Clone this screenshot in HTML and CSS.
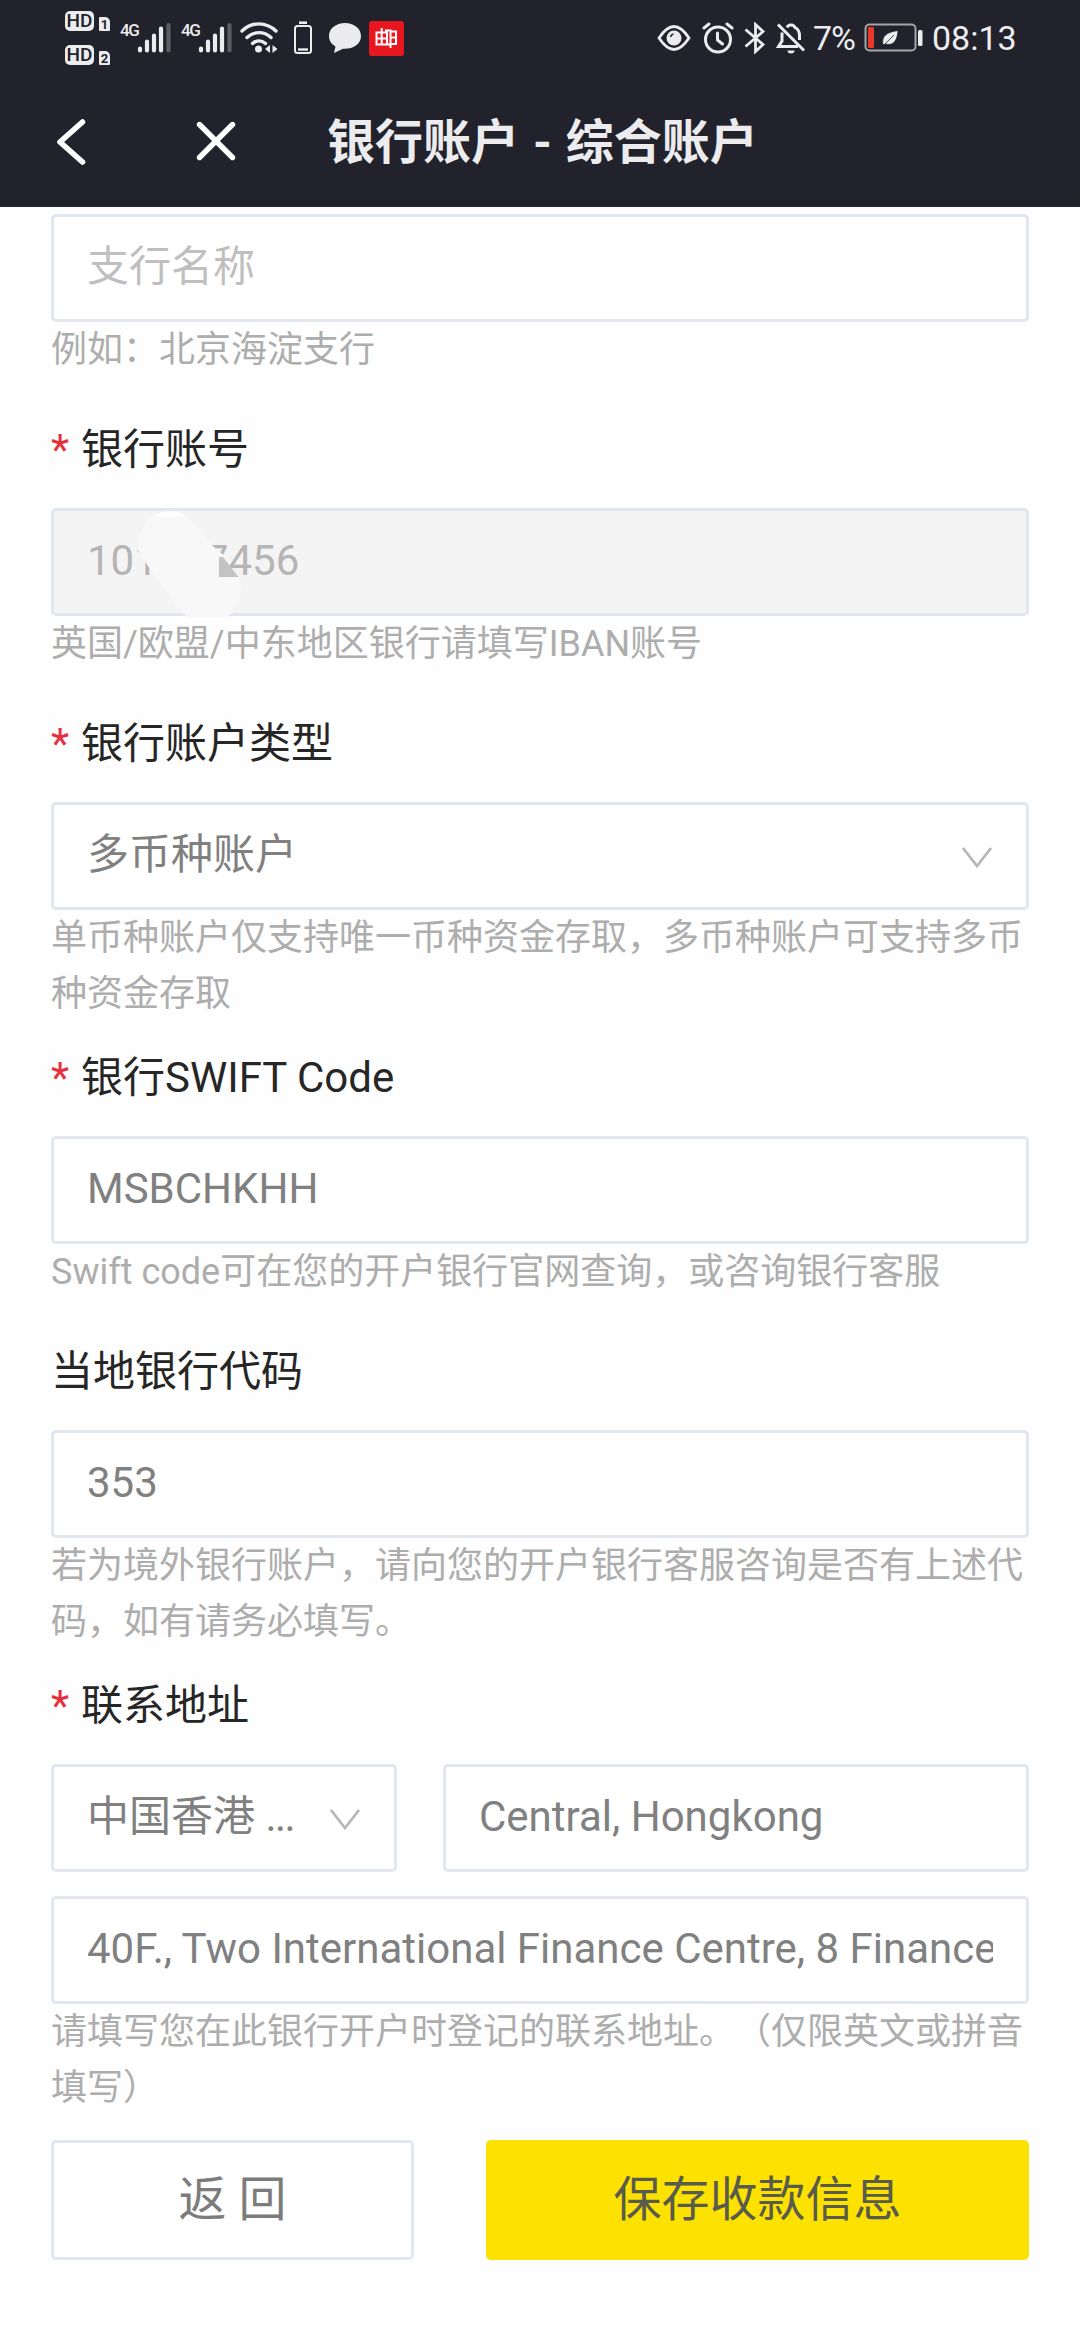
FILE: index.html
```html
<!DOCTYPE html>
<html lang="zh-CN">
<head>
<meta charset="utf-8">
<title>银行账户 - 综合账户</title>
<link rel="stylesheet" href="styles.css">
</head>
<body>
<header class="top">
  <div class="status">
    <div class="hd">
      <div class="hd-row"><span class="hd-tag">HD</span><span class="sim">1</span></div>
      <div class="hd-row"><span class="hd-tag">HD</span><span class="sim">2</span></div>
    </div>
    <div class="cell"><span class="gen">4G</span>
      <svg width="34" height="32" viewBox="0 0 34 32" stroke-width="4.2" stroke-linecap="round" stroke="#ececee"><path d="M3 28.5v-2M10 28.5v-9M17 28.5v-15M24 28.5v-22"/><path d="M31.500 28.500V3" stroke="#5d5d64"/></svg>
    </div>
    <div class="cell"><span class="gen">4G</span>
      <svg width="34" height="32" viewBox="0 0 34 32" stroke-width="4.2" stroke-linecap="round" stroke="#ececee"><path d="M3 28.500v-2M10 28.500v-9M17 28.500v-15M24 28.500v-22"/><path d="M31.500 28.500V3" stroke="#5d5d64"/></svg>
    </div>
    <svg class="wifi" width="38" height="32" viewBox="0 0 38 32" fill="none" stroke="#ececee" stroke-width="3.400" stroke-linecap="round"><path d="M2 9C12-.5 26-.5 36 9M7 15.500c7-6.500 17-6.500 24 0M12.500 21.500c4-3.500 9-3.500 13 0"/><circle cx="18.500" cy="27" r="3.500" fill="#ececee" stroke="none"/><path d="M30 23v8l-5-4zM32.500 23v8l5-4z" fill="#ececee" stroke="none"/></svg>
    <svg class="cellbat" width="20" height="34" viewBox="0 0 20 34" fill="none" stroke="#ececee" stroke-width="2"><rect x="2" y="5" width="16" height="27" rx="2.500"/><path d="M6 1.700h8" stroke-width="2.600"/><path d="M5 28.500h10" stroke-width="2.400"/></svg>
    <svg class="chat" width="34" height="32" viewBox="0 0 34 32" fill="#ececee"><path d="M17 1C8 1 1 6.500 1 14c0 4.600 2.500 8.300 6.500 10.500L6 31l9-4.200c10.500.5 18-4.800 18-12.800C33 6.500 26 1 17 1z"/></svg>
    <svg class="mail" width="35" height="35" viewBox="0 0 35 35" fill="none" stroke="#fff" stroke-width="2"><rect width="35" height="35" rx="3" fill="#e8171f" stroke="none"/><path d="M7.500 11.500h10.500v12H7.500zM12.700 7v16.500M7.500 17.500h10.500M16 9.500h5.500v14.500M21.500 9.500V27M21.500 10.500h5.500v12.500h-5.500M21.500 16.500h5.500M16 23.500h6" /></svg>
    <div class="right">
      <svg width="34" height="28" viewBox="0 0 34 28" fill="none" stroke="#ececee" stroke-width="2.800"><path d="M2 14C8 5 13 2.500 17 2.500S26 5 32 14c-6 9-11 11.500-15 11.500S8 23 2 14z"/><circle cx="17" cy="14" r="7.500" fill="#ececee" stroke="none"/><path d="M13.500 13a4 4 0 0 1 3-3" stroke="#21222b" stroke-width="1.500"/></svg>
      <svg class="alarm" width="32" height="32" viewBox="0 0 32 32" fill="none" stroke="#ececee" stroke-width="3" stroke-linecap="round"><circle cx="16" cy="17.500" r="12.500"/><path d="M2 6l5-4M30 6l-5-4M15.500 11v7l5 4"/></svg>
      <svg class="bt" width="22" height="32" viewBox="0 0 22 32" fill="none" stroke="#ececee" stroke-width="2.800"><path d="M1.500 7.500L19 22.500l-7.500 7V2.500l7.500 7-17.500 15"/></svg>
      <svg class="bell" width="30" height="32" viewBox="0 0 30 32" fill="none" stroke="#ececee" stroke-width="3"><path d="M11 5.500l1-1.500c1-1 2-1 3-1s2 0 3 1l1 1.500c3 1.500 4.500 4 4.500 8V18M6 10.500V19l-3.500 5.500H22M2 2.500l26 26"/><path d="M11.500 28.500h7a3.500 3 0 0 1-7 0z" fill="#ececee" stroke="none"/></svg>
      <span class="pct">7%</span>
      <svg class="bat" width="60" height="30" viewBox="0 0 60 30" fill="none"><rect x="1.500" y="1.500" width="50" height="26" rx="4" stroke="#a5a5aa" stroke-width="2"/><rect x="4" y="4" width="6" height="21" rx="1" fill="#e8392b"/><rect x="54" y="7" width="4.500" height="16" rx="1.500" fill="#ececee"/><path d="M19 22c-2-9 4-13 15-14.500-.5 9-4 16-12.500 13.500zM19 23l11-11" fill="#ececee" stroke="#21222b" stroke-width=".8"/></svg>
      <span class="clock">08:13</span>
    </div>
  </div>
  <nav class="nav">
    <svg class="back" width="32" height="46" viewBox="0 0 32 46" fill="none" stroke="#fff" stroke-width="5.600" stroke-linecap="round" stroke-linejoin="round"><path d="M27.500 3L5 23l22.500 20"/></svg>
    <svg class="close" width="40" height="40" viewBox="0 0 40 40" stroke="#fff" stroke-width="5.400" stroke-linecap="round"><path d="M3.500 3.500l33 33M36.500 3.500l-33 33"/></svg>
    <h1 class="title">银行账户 - 综合账户</h1>
  </nav>
</header>
<main class="form">
  <div class="item"><div class="box placeholder">支行名称</div><p class="hint">例如：北京海淀支行</p></div>
  <div class="item"><div class="label"><i>*</i>银行账号</div>
    <div class="box disabled">101<span class="gap"></span>7456
      <svg class="smudge" width="115" height="112" viewBox="0 0 115 112"><path d="M8 42C8 18 20 3 40 3c18 0 28 15 37 29l12 12 7 4-4 2h-3v19h19c5 13 3 27-7 37l-6 4H60C48 104 38 84 26 70L9 45z" fill="#f8f8f8"/><path d="M25 8.500C35 1.500 46 1.500 56 8.500z" fill="#fff"/><path d="M89 49h4l15.500 20H89z" fill="#c3c3c3"/></svg>
    </div>
    <p class="hint">英国/欧盟/中东地区银行请填写IBAN账号</p></div>
  <div class="item long"><div class="label"><i>*</i>银行账户类型</div>
    <div class="box select"><span>多币种账户</span><svg width="32" height="24" viewBox="0 0 32 24" fill="none" stroke="#b8b8b8" stroke-width="2.800"><path d="M2 2l14 18L30 2"/></svg></div>
    <p class="hint">单币种账户仅支持唯一币种资金存取，多币种账户可支持多币种资金存取</p></div>
  <div class="item"><div class="label"><i>*</i>银行SWIFT Code</div>
    <div class="box">MSBCHKHH</div><p class="hint">Swift code可在您的开户银行官网查询，或咨询银行客服</p></div>
  <div class="item long"><div class="label">当地银行代码</div>
    <div class="box">353</div><p class="hint">若为境外银行账户，请向您的开户银行客服咨询是否有上述代码，如有请务必填写。</p></div>
  <div class="item address"><div class="label"><i>*</i>联系地址</div>
    <div class="row">
      <div class="box select region"><span>中国香港 <b>...</b></span><svg width="32" height="24" viewBox="0 0 32 24" fill="none" stroke="#b8b8b8" stroke-width="2.800"><path d="M2 2l14 18L30 2"/></svg></div>
      <div class="box city">Central, Hongkong</div>
    </div>
    <div class="box"><span class="clip">40F., Two International Finance Centre, 8 Finance Street</span></div>
    <p class="hint">请填写您在此银行开户时登记的联系地址。（仅限英文或拼音填写）</p></div>
  <div class="actions"><button class="btn ghost">返 回</button><button class="btn primary">保存收款信息</button></div>
</main>
</body>
</html>
```
FILE: styles.css
```css
* { box-sizing: border-box; }
body { margin: 0; width: 1080px; height: 2340px; overflow: hidden; background: #fefefe; font-family: Roboto, "Noto Sans CJK SC", sans-serif; color: #222; text-spacing-trim: space-all; }
svg { display: block; flex: none; }
p, h1 { margin: 0; }

.top { height: 207px; background: #21222b; }
.status { height: 76px; display: flex; align-items: center; padding-left: 65px; padding-right: 64px; color: #ececee; }
.hd { display: flex; flex-direction: column; gap: 14px; width: 46px; }
.hd-row { display: flex; align-items: flex-end; gap: 5px; height: 20px; }
.hd-tag { width: 29px; height: 20px; border-radius: 5px; background: #ececee; color: #21222b; font-size: 19px; line-height: 20px; text-align: center; font-weight: 500; }
.sim { width: 11px; height: 14px; border-radius: 1px 5px 1px 1px; background: #ececee; color: #21222b; font-size: 13px; line-height: 15px; font-weight: 700; text-align: center; }
.cell { display: flex; width: 61px; padding-left: 9px; }
.cell svg { margin-left: -1px; }
.gen { width: 18px; font-size: 17px; line-height: 16px; letter-spacing: -1.500px; font-weight: 500; }
.wifi { margin-left: 7px; }
.cellbat { margin-left: 15px; }
.chat { margin-left: 15px; }
.mail { margin-left: 7px; }
.right { margin-left: auto; display: flex; align-items: center; }
.alarm { margin-left: 11px; }
.bt { margin-left: 10px; }
.bell { margin-left: 10px; }
.pct { margin-left: 7px; width: 44px; font-size: 34px; letter-spacing: -1px; }
.bat { margin-left: 7px; }
.clock { margin-left: 8px; width: 84px; font-size: 34px; }

.nav { height: 131px; display: flex; align-items: center; padding: 0 0 1px 55px; }
.back { margin-top: 1px; }
.close { margin-left: 109px; }
.title { margin: 3px 0 0 91px; font-size: 48px; line-height: 70px; font-weight: 700; color: #ececee; white-space: pre; word-spacing: 2px; }

.form { padding: 7px 51px 0; }
.item { padding-bottom: 20px; }
.item.long { padding-bottom: 4px; }
.item.address { padding-bottom: 24px; }
.label { height: 100px; margin-bottom: 10px; font-size: 42px; line-height: 104px; color: #262626; }
.label i { font-style: normal; color: #e6303c; margin-right: 12px; }
.box { position: relative; height: 108px; border: 3px solid #e2e7ef; border-radius: 5px; padding: 0 33px; font-size: 42px; line-height: 100px; color: #808080; white-space: nowrap; background: #fff; }
.placeholder { color: #bfbfbf; }
.disabled { background: #f4f4f4; color: #b5b5b5; }
.gap { display: inline-block; width: 47px; }
.smudge { position: absolute; left: 76px; top: -3px; }
.select { display: flex; justify-content: space-between; align-items: center; }
.select span { height: 102px; }
.select svg { margin-top: 4px; }
.select b { font-weight: 400; letter-spacing: -1.500px; }
.hint { font-size: 36px; line-height: 56px; color: #adadad; }
.row { display: flex; gap: 46px; margin-bottom: 24px; }
.region { width: 346px; }
.city { flex: 1; }
.clip { display: block; overflow: hidden; }
.actions { display: flex; gap: 72px; }
.btn { height: 120px; border-radius: 5px; font: 48px/112px Roboto, "Noto Sans CJK SC", sans-serif; padding: 0; }
.ghost { width: 363px; background: #fff; border: 3px solid #e2e7ef; color: #7c7c7c; }
.primary { flex: 1; background: #fde100; border: 0; color: #595b4d; }
```
